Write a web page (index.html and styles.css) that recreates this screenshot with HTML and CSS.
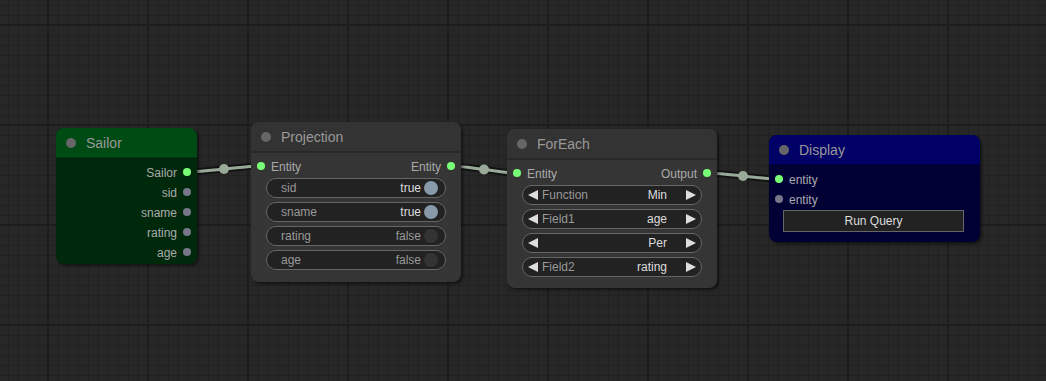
FILE: index.html
```html
<!DOCTYPE html>
<html>
<head>
<meta charset="utf-8">
<title>Graph</title>
<link rel="stylesheet" href="styles.css">
</head>
<body>
<div class="canvas">
  <svg class="links" width="1046" height="381" viewBox="0 0 1046 381">
    <g class="link-border">
      <path d="M187 172 C205.56 172 242.44 166 261 166"/>
      <path d="M451 166 C467.6 166 500.4 173 517 173"/>
      <path d="M707 173 C725.06 173 760.94 179 779 179"/>
    </g>
    <g class="link">
      <path d="M187 172 C205.56 172 242.44 166 261 166"/>
      <path d="M451 166 C467.6 166 500.4 173 517 173"/>
      <path d="M707 173 C725.06 173 760.94 179 779 179"/>
    </g>
    <g class="link-mid">
      <circle cx="224" cy="169" r="5"/>
      <circle cx="484" cy="169.5" r="5"/>
      <circle cx="743" cy="176" r="5"/>
    </g>
  </svg>

  <div class="node node-sailor">
    <div class="title"><span class="box"></span>Sailor</div>
    <div class="body">
      <div class="row"><div class="slot out"><span class="label">Sailor</span><span class="dot on"></span></div></div>
      <div class="row"><div class="slot out"><span class="label">sid</span><span class="dot"></span></div></div>
      <div class="row"><div class="slot out"><span class="label">sname</span><span class="dot"></span></div></div>
      <div class="row"><div class="slot out"><span class="label">rating</span><span class="dot"></span></div></div>
      <div class="row"><div class="slot out"><span class="label">age</span><span class="dot"></span></div></div>
    </div>
  </div>

  <div class="node node-projection">
    <div class="title"><span class="box"></span>Projection</div>
    <div class="body">
      <div class="row">
        <div class="slot in"><span class="dot on"></span><span class="label">Entity</span></div>
        <div class="slot out"><span class="label">Entity</span><span class="dot on"></span></div>
      </div>
      <div class="widgets">
        <div class="toggle"><span class="wlabel">sid</span><span class="wval">true</span><span class="knob on"></span></div>
        <div class="toggle"><span class="wlabel">sname</span><span class="wval">true</span><span class="knob on"></span></div>
        <div class="toggle"><span class="wlabel">rating</span><span class="wval off">false</span><span class="knob"></span></div>
        <div class="toggle"><span class="wlabel">age</span><span class="wval off">false</span><span class="knob"></span></div>
      </div>
    </div>
  </div>

  <div class="node node-foreach">
    <div class="title"><span class="box"></span>ForEach</div>
    <div class="body">
      <div class="row">
        <div class="slot in"><span class="dot on"></span><span class="label">Entity</span></div>
        <div class="slot out"><span class="label">Output</span><span class="dot on"></span></div>
      </div>
      <div class="widgets">
        <div class="combo"><span class="arrow-l"></span><span class="wlabel">Function</span><span class="wval">Min</span><span class="arrow-r"></span></div>
        <div class="combo"><span class="arrow-l"></span><span class="wlabel">Field1</span><span class="wval">age</span><span class="arrow-r"></span></div>
        <div class="combo"><span class="arrow-l"></span><span class="wlabel"></span><span class="wval">Per</span><span class="arrow-r"></span></div>
        <div class="combo"><span class="arrow-l"></span><span class="wlabel">Field2</span><span class="wval">rating</span><span class="arrow-r"></span></div>
      </div>
    </div>
  </div>

  <div class="node node-display">
    <div class="title"><span class="box"></span>Display</div>
    <div class="body">
      <div class="row"><div class="slot in"><span class="dot on"></span><span class="label">entity</span></div></div>
      <div class="row"><div class="slot in"><span class="dot"></span><span class="label">entity</span></div></div>
      <div class="button">Run Query</div>
    </div>
  </div>
</div>
</body>
</html>
```

FILE: styles.css
```css
html, body {
  margin: 0;
  padding: 0;
  background: #272727;
  font-family: "Liberation Sans", Arial, sans-serif;
}

.canvas {
  position: relative;
  width: 1046px;
  height: 381px;
  overflow: hidden;
  background-color: #272727;
  background-image:
    linear-gradient(to right, #1d1d1d 2px, transparent 2px),
    linear-gradient(to bottom, #1d1d1d 2px, transparent 2px),
    linear-gradient(to right, #212121 1px, transparent 1px),
    linear-gradient(to bottom, #212121 1px, transparent 1px);
  background-size: 100px 100px, 100px 100px, 10px 10px, 10px 10px;
  background-position: 47px 0, 0 24px, 8px 0, 0 5px;
}

.links {
  position: absolute;
  left: 0;
  top: 0;
}

.link-border path {
  fill: none;
  stroke: rgba(0, 0, 0, 0.5);
  stroke-width: 7;
  stroke-linecap: round;
}

.link path {
  fill: none;
  stroke: #9a9;
  stroke-width: 3;
}

.link-mid circle {
  fill: #9a9;
}

.node {
  position: absolute;
  display: flex;
  flex-direction: column;
  border-radius: 8px;
  background: #353535;
  box-shadow: 2px 2px 3px rgba(0, 0, 0, 0.5);
  overflow: hidden;
}

.node-sailor { left: 56px; top: 128px; width: 141px; height: 136px; background: #00290c; }
.node-projection { left: 251px; top: 122px; width: 210px; height: 160px; }
.node-foreach { left: 507px; top: 129px; width: 210px; height: 159px; }
.node-display { left: 769px; top: 135px; width: 211px; height: 107px; background: #000035; }

.title {
  flex: 0 0 30px;
  height: 30px;
  display: flex;
  align-items: center;
  background: #333;
  color: #999;
  font-size: 14px;
  line-height: 30px;
  white-space: nowrap;
  box-shadow: inset 0 -1px 0 rgba(0, 0, 0, 0.2), 0 1px 0 rgba(0, 0, 0, 0.2);
  position: relative;
  z-index: 1;
}

.node-sailor .title { background: #004a14; }
.node-display .title { background: #000066; }

.title .box {
  width: 10px;
  height: 10px;
  border-radius: 50%;
  background: #666;
  margin: 0 10px;
  flex: 0 0 10px;
}

.body {
  flex: 1;
  display: flex;
  flex-direction: column;
  padding-top: 4px;
}

.row {
  height: 20px;
  display: flex;
  align-items: center;
  justify-content: space-between;
  font-size: 12px;
  color: #aaa;
}

.slot {
  display: flex;
  align-items: center;
}

.slot.out {
  margin-left: auto;
}

.dot {
  width: 8px;
  height: 8px;
  border-radius: 50%;
  background: #778;
  margin: 0 6px;
  flex: 0 0 8px;
}

.dot.on {
  background: #7f7;
}

.label {
  line-height: 20px;
  padding-top: 2px;
  white-space: nowrap;
}

.widgets {
  display: flex;
  flex-direction: column;
  gap: 4px;
  margin: 2px 15px 0;
}

.toggle,
.combo {
  height: 20px;
  box-sizing: border-box;
  border: 1px solid #666;
  border-radius: 10px;
  background: #222;
  display: flex;
  align-items: center;
  font-size: 12px;
  line-height: 18px;
  white-space: nowrap;
}

.wlabel {
  color: #999;
}

.wval {
  margin-left: auto;
  color: #ddd;
}

.wval.off {
  color: #999;
}

.toggle .wlabel {
  margin-left: 14px;
}

.knob {
  width: 14px;
  height: 14px;
  border-radius: 50%;
  background: #333;
  margin: 0 7px 0 3px;
  flex: 0 0 14px;
}

.knob.on {
  background: #89a;
}

.arrow-l,
.arrow-r {
  width: 0;
  height: 0;
  border-top: 5px solid transparent;
  border-bottom: 5px solid transparent;
}

.arrow-l {
  border-right: 10px solid #ddd;
  margin-left: 5px;
}

.arrow-r {
  border-left: 10px solid #ddd;
  margin-right: 5px;
}

.combo .wlabel {
  margin-left: 4px;
}

.combo .wval {
  margin-right: 19px;
}

.button {
  height: 22px;
  margin: 1px 16px 0 14px;
  box-sizing: border-box;
  border: 1px solid #666;
  background: #222;
  color: #ddd;
  font-size: 12px;
  line-height: 20px;
  text-align: center;
}
```
